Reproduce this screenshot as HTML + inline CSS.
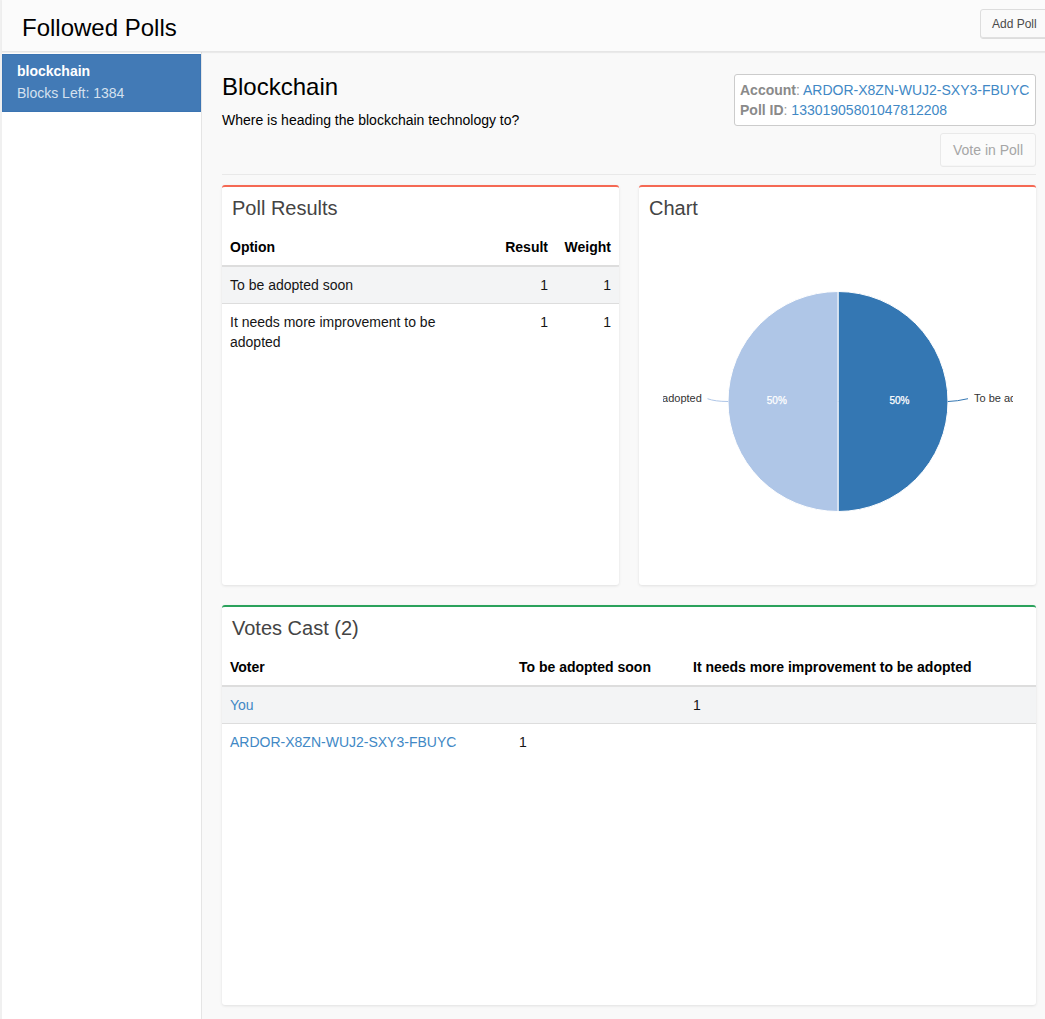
<!DOCTYPE html>
<html lang="en">
<head>
<meta charset="utf-8">
<title>Followed Polls</title>
<style>
*{box-sizing:border-box;margin:0;padding:0}
html,body{width:1045px;height:1019px;overflow:hidden}
body{position:relative;background:#f9f9f9;font-family:"Liberation Sans",Arial,Helvetica,sans-serif;font-size:14px;line-height:20px;color:#000}
.abs{position:absolute}
#strip{left:0;top:0;width:2px;height:1019px;background:#f0f0f0}
#hdr{left:2px;top:0;width:1043px;height:52px;background:#fbfbfb;border-bottom:1px solid #e6e6e6;box-shadow:0 1px 1px rgba(0,0,0,.06);z-index:3}
#hdr h1{position:absolute;left:20px;top:13px;font-size:24px;line-height:30px;font-weight:400;color:#000;white-space:nowrap}
.btn{position:absolute;border:1px solid #ddd;border-radius:3px;background:#fafafa;color:#4a4a4a;white-space:nowrap;box-shadow:inset 0 -2px 0 0 rgba(0,0,0,.09)}
#addpoll{left:978px;top:9px;width:80px;height:30px;font-size:12px;line-height:18px;padding:5px 11px;border-radius:3px 0 0 3px;box-shadow:inset 0 -1px 0 0 rgba(0,0,0,.1)}
#side{left:2px;top:52px;width:200px;height:967px;background:#fff;border-right:1px solid #e5e5e5}
#item{left:0;top:2px;width:199px;height:58px;background:#427ab6;border:1px solid #3b74b2;color:#fff}
#item b{position:absolute;left:14px;top:6px;font-size:14px;line-height:20px;white-space:nowrap}
#item span{position:absolute;left:14px;top:28px;font-size:14px;line-height:20px;color:#d5e1ef;white-space:nowrap}
#main{left:202px;top:52px;width:843px;height:967px}
h2.title{position:absolute;left:222px;top:72px;font-size:24px;line-height:30px;font-weight:400;color:#000;white-space:nowrap}
p.desc{position:absolute;left:222px;top:110px;font-size:14px;line-height:20px;color:#000;white-space:nowrap}
#acct{left:734px;top:74px;width:302px;height:52px;background:#fff;border:1px solid #ccc;border-radius:3px;font-size:14px;line-height:20px;color:#999;padding:5px 5px;white-space:nowrap}
#acct b{color:#8a8a8a}
#acct span{color:#4188c5}
#vote{left:940px;top:133px;width:96px;height:34px;font-size:14px;line-height:20px;padding:6px 12px;color:#a6a6a6;border-color:#e9e9e9;background:#fbfbfb;box-shadow:inset 0 -1px 0 0 rgba(0,0,0,.02)}
#hr{left:222px;top:174px;width:814px;height:1px;background:#e9e9e9}
.box{position:absolute;background:#fff;border-top:2px solid #f56954;border-radius:3px;box-shadow:0 1px 3px rgba(0,0,0,.1)}
.box h3{position:absolute;left:10px;top:10px;font-size:20px;line-height:22px;font-weight:400;color:#444;white-space:nowrap}
#b1{left:222px;top:185px;width:397px;height:400px}
#b2{left:639px;top:185px;width:397px;height:400px}
#b3{left:222px;top:605px;width:814px;height:400px;border-top-color:#2ba25c}
table{position:absolute;left:0;border-collapse:collapse;font-size:14px;line-height:20px;color:#151515}
th{font-weight:700;text-align:left;padding:8px;border-bottom:2px solid #ddd;vertical-align:bottom;color:#000}
td{padding:8px;border-top:1px solid #ddd;vertical-align:top}
tr.odd td{background:#f3f4f5}
tr:first-child td{border-top:0}
.r{text-align:right}
a{color:#4188c5;text-decoration:none}
</style>
</head>
<body>
<div id="strip" class="abs"></div>
<div id="hdr" class="abs"><h1>Followed Polls</h1><div id="addpoll" class="btn">Add Poll</div></div>
<div id="side" class="abs"><div id="item" class="abs"><b>blockchain</b><span>Blocks Left: 1384</span></div></div>
<h2 class="title">Blockchain</h2>
<p class="desc">Where is heading the blockchain technology to?</p>
<div id="acct" class="abs"><b>Account</b>: <span>ARDOR-X8ZN-WUJ2-SXY3-FBUYC</span><br><b>Poll ID</b>: <span>13301905801047812208</span></div>
<div id="vote" class="btn">Vote in Poll</div>
<div id="hr" class="abs"></div>

<div id="b1" class="box"><h3>Poll Results</h3>
<table style="top:42px;width:397px">
<thead><tr><th>Option</th><th class="r" style="width:76px">Result</th><th class="r" style="width:63px">Weight</th></tr></thead>
<tbody>
<tr class="odd"><td>To be adopted soon</td><td class="r">1</td><td class="r">1</td></tr>
<tr><td>It needs more improvement to be adopted</td><td class="r">1</td><td class="r">1</td></tr>
</tbody></table>
</div>

<div id="b2" class="box"><h3>Chart</h3>
</div>

<svg class="abs" style="left:663px;top:226px;overflow:hidden" width="350" height="350" viewBox="0 0 350 350" font-family="'Liberation Sans',Arial,sans-serif">
<path d="M175 175.5V65.5A110 110 0 0 1 175 285.5Z" fill="#3477b3" stroke="#fff" stroke-width="1"/>
<path d="M175 175.5V285.5A110 110 0 0 1 175 65.5Z" fill="#afc6e7" stroke="#fff" stroke-width="1"/>
<path d="M285 175.5Q294 175.3 305 172.7" fill="none" stroke="#3477b3" stroke-width="1"/>
<path d="M65 175.5Q52 175.5 44.5 172.7" fill="none" stroke="#afc6e7" stroke-width="1"/>
<text x="311" y="175.8" font-size="11" fill="#333">To be adopted soon</text>
<text x="38.8" y="175.8" font-size="11" fill="#333" text-anchor="end">It needs more improvement to be<tspan dx="8">adopted</tspan></text>
<text x="236.4" y="178.2" font-size="10" fill="#fff" stroke="#fff" stroke-width="0.25" text-anchor="middle">50%</text>
<text x="113.8" y="178.2" font-size="10" fill="#fff" stroke="#fff" stroke-width="0.25" text-anchor="middle">50%</text>
</svg>
<div id="b3" class="box"><h3>Votes Cast (2)</h3>
<table style="top:42px;width:814px">
<thead><tr><th style="width:289px">Voter</th><th style="width:174px">To be adopted soon</th><th>It needs more improvement to be adopted</th></tr></thead>
<tbody>
<tr class="odd"><td><a>You</a></td><td></td><td>1</td></tr>
<tr><td><a>ARDOR-X8ZN-WUJ2-SXY3-FBUYC</a></td><td>1</td><td></td></tr>
</tbody></table>
</div>
</body>
</html>
